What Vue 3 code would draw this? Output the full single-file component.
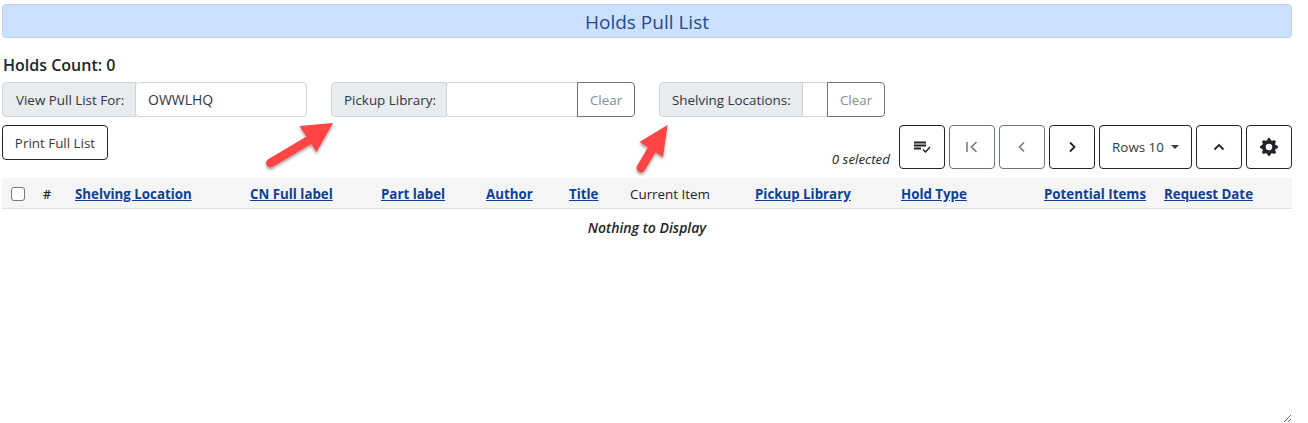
<script setup>
const columns = [
  { label: "Shelving Location", link: true },
  { label: "CN Full label", link: true },
  { label: "Part label", link: true },
  { label: "Author", link: true },
  { label: "Title", link: true },
  { label: "Current Item", link: false },
  { label: "Pickup Library", link: true },
  { label: "Hold Type", link: true },
  { label: "Potential Items", link: true },
  { label: "Request Date", link: true },
];
</script>

<template>
  <div class="page">
    <h1 class="banner">Holds Pull List</h1>
    <div class="count">Holds Count: 0</div>

    <div class="filters">
      <div class="group group-view">
        <span class="addon addon-view">View Pull List For:</span>
        <div class="field field-org">OWWLHQ</div>
      </div>
      <div class="group group-pickup">
        <span class="addon addon-pickup">Pickup Library:</span>
        <div class="field field-pickup"></div>
        <button class="clear">Clear</button>
      </div>
      <div class="group">
        <span class="addon addon-shelf">Shelving Locations:</span>
        <div class="field field-shelf"></div>
        <button class="clear">Clear</button>
      </div>
    </div>

    <div class="toolbar">
      <button class="btn print">Print Full List</button>
      <div class="tools">
        <span class="selected">0 selected</span>
        <button class="btn icon">
          <svg width="18" height="18" viewBox="0 0 18 18" fill="none" stroke="#212529">
            <path d="M1 4.500h12M1 7.500h12M1 10.500h7" stroke-width="1.800" />
            <path d="M10 11.500l2.500 2.500 4.500-5" stroke-width="1.500" />
          </svg>
        </button>
        <button class="btn icon off">
          <svg width="16" height="16" viewBox="0 0 16 16" fill="none" stroke="currentColor" stroke-width="1.500">
            <path d="M3 3v10M12.500 3l-5 5 5 5" />
          </svg>
        </button>
        <button class="btn icon off">
          <svg width="16" height="16" viewBox="0 0 16 16" fill="none" stroke="currentColor" stroke-width="1.500">
            <path d="M10 3.500L5.500 8l4.500 4.500" />
          </svg>
        </button>
        <button class="btn icon">
          <svg width="16" height="16" viewBox="0 0 16 16" fill="none" stroke="#212529" stroke-width="1.800">
            <path d="M6 3.500L10.500 8 6 12.500" />
          </svg>
        </button>
        <button class="btn rows">Rows 10<i class="caret"></i></button>
        <button class="btn icon">
          <svg width="16" height="16" viewBox="0 0 16 16" fill="none" stroke="#212529" stroke-width="1.800">
            <path d="M3.500 10.500L8 6l4.500 4.500" />
          </svg>
        </button>
        <button class="btn icon gear">
          <svg width="18" height="18" viewBox="0 0 16 16" fill="#212529">
            <path d="M9.405 1.050c-.413-1.400-2.397-1.400-2.810 0l-.100.340a1.464 1.464 0 0 1-2.105.872l-.310-.170c-1.283-.698-2.686.705-1.987 1.987l.169.311c.446.820.023 1.841-.872 2.105l-.340.100c-1.400.413-1.400 2.397 0 2.810l.340.100a1.464 1.464 0 0 1 .872 2.105l-.170.310c-.698 1.283.705 2.686 1.987 1.987l.311-.169a1.464 1.464 0 0 1 2.105.872l.100.340c.413 1.400 2.397 1.400 2.810 0l.100-.340a1.464 1.464 0 0 1 2.105-.872l.310.170c1.283.698 2.686-.705 1.987-1.987l-.169-.311a1.464 1.464 0 0 1 .872-2.105l.340-.100c1.400-.413 1.400-2.397 0-2.810l-.340-.100a1.464 1.464 0 0 1-.872-2.105l.170-.310c.698-1.283-.705-2.686-1.987-1.987l-.311.169a1.464 1.464 0 0 1-2.105-.872l-.100-.340zM8 10.930a2.929 2.929 0 1 1 0-5.860 2.929 2.929 0 0 1 0 5.858z" />
          </svg>
        </button>
      </div>
    </div>

    <div class="grid-wrap">
      <div class="grid-head">
        <span class="cell-check"><i class="check"></i></span>
        <span class="cell-num">#</span>
        <span v-for="col in columns" :key="col.label" :class="{ sort: col.link }">{{ col.label }}</span>
      </div>
      <div class="empty">Nothing to Display</div>
    </div>

    <svg class="arrow arrow-one" width="76" height="54" viewBox="0 0 76 54">
      <defs>
        <filter id="arrow-shadow" x="-20%" y="-20%" width="140%" height="150%">
          <feDropShadow dx="0" dy="2" stdDeviation="1.800" flood-color="#000" flood-opacity="0.4" />
        </filter>
      </defs>
      <g filter="url(#arrow-shadow)" fill="#ff4444">
        <path d="M6.500 43L47 19" stroke="#ff4444" stroke-width="9" stroke-linecap="round" />
        <path d="M35.500 6L69 3 52.500 32z" />
      </g>
    </svg>
    <svg class="arrow arrow-two" width="50" height="60" viewBox="0 0 50 60">
      <g filter="url(#arrow-shadow)" fill="#ff4444">
        <path d="M9 46L22 24" stroke="#ff4444" stroke-width="9" stroke-linecap="round" />
        <path d="M7.500 20L35.500 3 31 35z" />
      </g>
    </svg>
  </div>
</template>

<style scoped>
.page {
  position: relative;
  box-sizing: border-box;
  height: 423px;
  padding: 4px 16px 0 2px;
  display: flex;
  flex-direction: column;
  font-family: "Open Sans", "Noto Sans", sans-serif;
  font-size: 13.400px;
  color: #212529;
}

.banner {
  margin: 0;
  height: 34px;
  line-height: 34px;
  box-sizing: border-box;
  text-align: center;
  font-size: 19px;
  font-weight: 400;
  color: #2a4a8c;
  background: #cce0ff;
  border: 1px solid #b5d3fb;
  border-radius: 4px;
}

.count {
  margin: 16px 0 0 1px;
  height: 22px;
  line-height: 22px;
  font-size: 16px;
  font-weight: 600;
}

.filters {
  display: flex;
  margin-top: 6px;
  height: 35px;
}

.group {
  display: flex;
  height: 35px;
}

.group-view,
.group-pickup {
  margin-right: 24px;
}

.addon {
  display: flex;
  align-items: center;
  box-sizing: border-box;
  padding-left: 12px;
  background: #e9ecef;
  border: 1px solid #ced4da;
  border-radius: 4px 0 0 4px;
  color: #2f363d;
  white-space: nowrap;
}

.addon-view {
  width: 134px;
  padding-left: 13px;
}

.addon-pickup {
  width: 116px;
}

.addon-shelf {
  width: 144px;
}

.field {
  box-sizing: border-box;
  margin-left: -1px;
  height: 35px;
  line-height: 33px;
  padding-left: 12px;
  background: #fff;
  border: 1px solid #ced4da;
  font-size: 14px;
  color: #2f363d;
}

.field-org {
  width: 172px;
  border-radius: 4px;
}

.field-pickup {
  width: 132px;
  border-radius: 4px 0 0 4px;
}

.field-shelf {
  width: 26px;
  padding: 0;
}

.clear {
  box-sizing: border-box;
  width: 58px;
  height: 35px;
  margin-left: -1px;
  padding: 0;
  background: #fff;
  border: 1px solid #6c757d;
  border-radius: 0 4px 4px 0;
  font: inherit;
  color: #868e96;
}

.toolbar {
  display: flex;
  justify-content: space-between;
  align-items: flex-start;
  margin-top: 8px;
  height: 53px;
}

.btn {
  box-sizing: border-box;
  height: 44px;
  padding: 0;
  background: #fff;
  border: 1px solid #212529;
  border-radius: 4px;
  font: inherit;
  color: #343a40;
  display: flex;
  align-items: center;
  justify-content: center;
}

.print {
  width: 106px;
  height: 35px;
}

.tools {
  display: flex;
  gap: 4px;
  align-items: flex-start;
}

.selected {
  align-self: flex-end;
  margin-right: 5px;
  font-style: italic;
  font-size: 13.400px;
  line-height: 17px;
  margin-bottom: 1px;
}

.icon {
  width: 46px;
}

.off {
  border-color: #6c757d;
  color: #6c757d;
}

.rows {
  width: 93px;
}

.caret {
  margin-left: 7px;
  border-top: 4.500px solid #343a40;
  border-left: 4.500px solid transparent;
  border-right: 4.500px solid transparent;
}

.grid-wrap {
  flex: 1;
  overflow: auto;
  resize: vertical;
}

.grid-head {
  display: grid;
  grid-template-columns: 36px 37px 175px 131px 105px 83px 61px 125px 146px 143px 120px 128px;
  align-items: center;
  height: 31px;
  padding-top: 2px;
  box-sizing: border-box;
  background: #f5f5f5;
  border-bottom: 1px solid #e0e0e0;
  color: #212529;
  white-space: nowrap;
}

.cell-check {
  display: flex;
  padding-left: 9px;
}

.check {
  box-sizing: border-box;
  width: 14px;
  height: 14px;
  background: #fff;
  border: 1px solid #767676;
  border-radius: 3px;
}

.cell-num {
  padding-left: 5px;
  font-size: 12.500px;
  font-weight: 600;
}

.sort {
  color: #0d3f96;
  font-size: 13.300px;
  font-weight: 700;
  text-decoration: underline;
}

.empty {
  margin-top: 10px;
  text-align: center;
  font-style: italic;
  font-weight: 600;
  font-size: 14px;
  line-height: 18px;
}

.arrow {
  position: absolute;
}

.arrow-one {
  left: 264px;
  top: 120px;
}

.arrow-two {
  left: 632px;
  top: 122px;
}
</style>

<style>
html,
body {
  margin: 0;
  background: #fff;
  overflow: hidden;
}
</style>
